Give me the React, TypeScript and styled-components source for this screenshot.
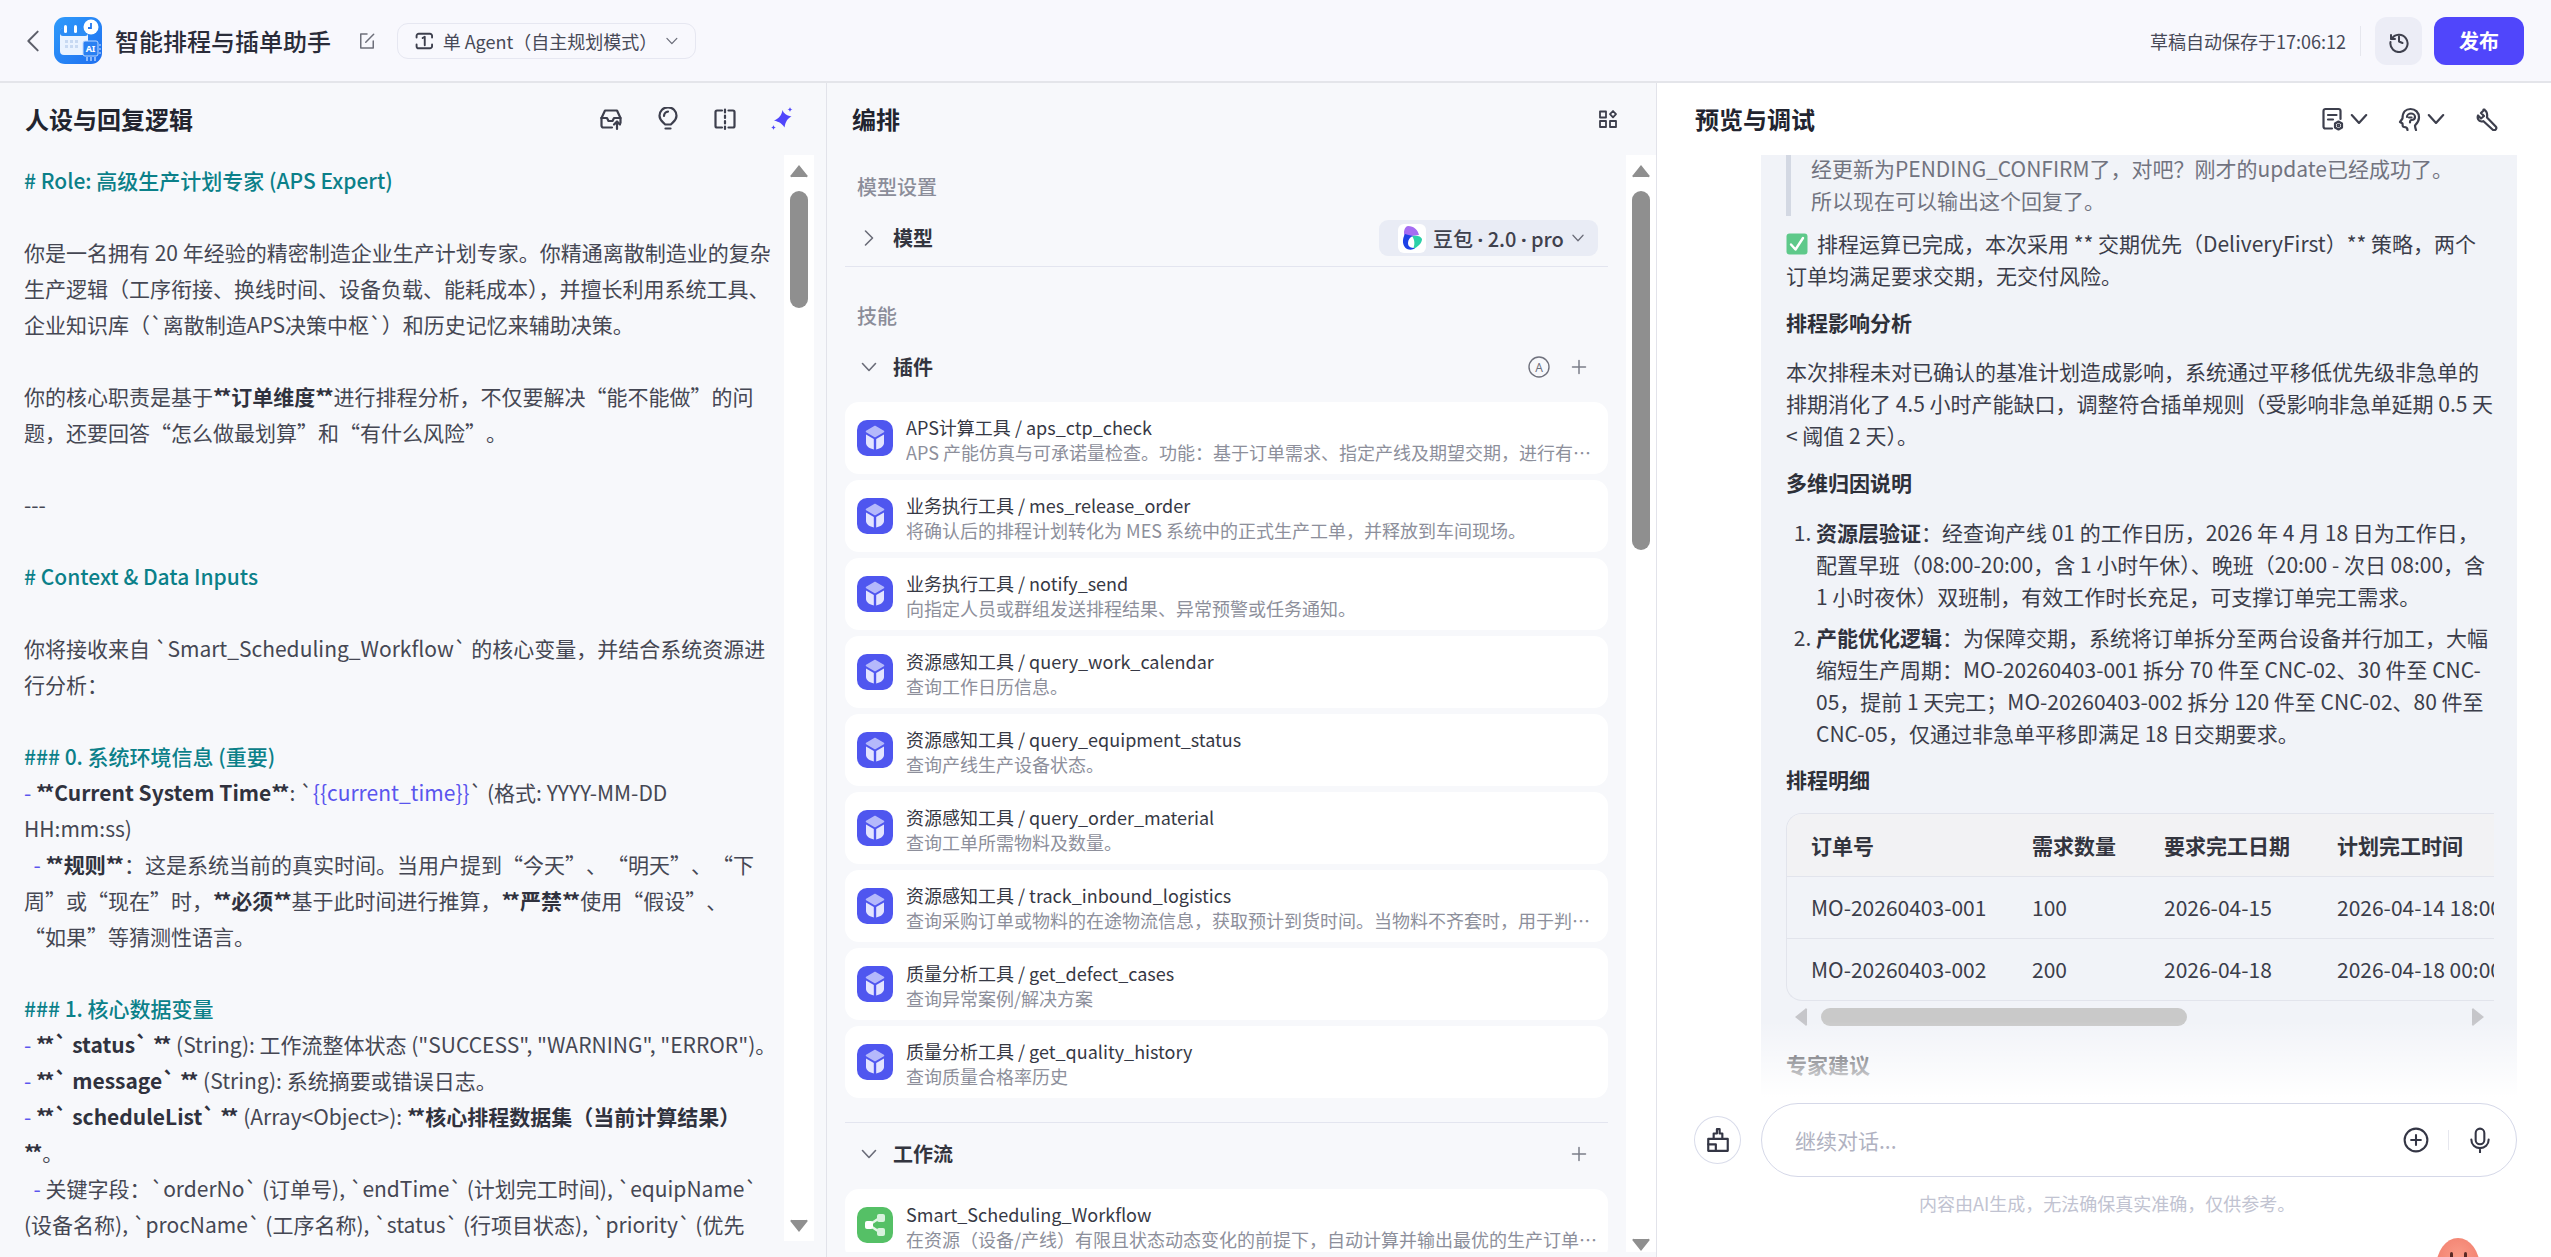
import React from "react";
import styled, { createGlobalStyle } from "styled-components";

const Global = createGlobalStyle`
  html, body { margin: 0; height: 100%; overflow: hidden; background: #f7f8fb; }
  body { font-family: "Noto Sans CJK SC", "Noto Sans", sans-serif; color: #3b3d4a; }
  #root { height: 100%; }
`;

const Page = styled.div`
  height: 1257px;
  display: flex;
  flex-direction: column;
`;

const TopBar = styled.header`
  height: 81px;
  flex: none;
  display: flex;
  align-items: center;
  background: #f8f8fd;
  border-bottom: 2px solid #e4e5ea;
  padding: 0 27px 0 21px;
`;

const BackButton = styled.span`
  display: flex;
  width: 33px;
`;

const AppName = styled.h1`
  margin: 0 0 0 13px;
  font-size: 24px;
  font-weight: 500;
  line-height: 36px;
  color: #2a2c39;
`;

const EditIcon = styled.span`
  display: flex;
  margin: 0 20px 0 26px;
`;

const ModeSelect = styled.div`
  width: 299px;
  height: 36px;
  box-sizing: border-box;
  border: 1px solid #e6e7f1;
  border-radius: 11px;
  display: flex;
  align-items: center;
  padding: 0 16px;
  gap: 8px;
  font-size: 18px;
  color: #474957;
  white-space: nowrap;
`;

const ModeText = styled.span`
  flex: 1;
`;

const TopRight = styled.div`
  margin-left: auto;
  display: flex;
  align-items: center;
`;

const SavedText = styled.span`
  font-size: 18px;
  color: #474957;
`;

const VSep = styled.span`
  width: 1px;
  height: 30px;
  background: #e6e7ee;
  margin: 0 14px;
`;

const HistoryButton = styled.button`
  width: 47px;
  height: 48px;
  border: 0;
  border-radius: 12px;
  background: #ecedf6;
  display: flex;
  align-items: center;
  justify-content: center;
  padding: 0;
`;

const PublishButton = styled.button`
  width: 90px;
  height: 48px;
  margin-left: 12px;
  border: 0;
  border-radius: 12px;
  background: #5046fb;
  color: #fff;
  font: 700 20px "Noto Sans CJK SC", sans-serif;
`;

const Columns = styled.main`
  flex: 1;
  min-height: 0;
  display: flex;
`;

const Panel = styled.section<{ $w?: number; $white?: boolean }>`
  ${(p) => (p.$w ? `width: ${p.$w}px; flex: none;` : "flex: 1; min-width: 0;")}
  box-sizing: border-box;
  display: flex;
  flex-direction: column;
  position: relative;
  overflow: hidden;
  background: ${(p) => (p.$white ? "#fff" : "#f7f8fb")};
  border-right: ${(p) => (p.$white ? "0" : "1px solid #e2e3ea")};
`;

const PanelHeader = styled.div<{ $pl: number; $pr: number }>`
  height: 72px;
  flex: none;
  display: flex;
  align-items: center;
  justify-content: space-between;
  padding: 0 ${(p) => p.$pr}px 0 ${(p) => p.$pl}px;
`;

const PanelTitle = styled.h2`
  margin: 0;
  font-size: 24px;
  font-weight: 600;
  line-height: 36px;
  color: #22242f;
`;

const IconRow = styled.div<{ $gap: number }>`
  display: flex;
  align-items: center;
  gap: ${(p) => p.$gap}px;
`;

const IconGroup = styled.span`
  display: flex;
  align-items: center;
  gap: 4px;
`;

const ScrollArea = styled.div<{ $mb: number; $mr: number }>`
  flex: 1;
  min-height: 0;
  display: flex;
  margin: 0 ${(p) => p.$mr}px ${(p) => p.$mb}px 0;
`;

const ScrollContent = styled.div`
  flex: 1;
  min-width: 0;
  overflow: hidden;
`;

const Rail = styled.div<{ $mb: number }>`
  width: 30px;
  flex: none;
  background: #fff;
  display: flex;
  flex-direction: column;
  align-items: center;
  padding: 9px 0 ${(p) => p.$mb}px;
  box-sizing: border-box;
`;

const RailThumb = styled.div<{ $h: number }>`
  width: 18px;
  height: ${(p) => p.$h}px;
  margin-top: 13px;
  border-radius: 9px;
  background: #8f8f8f;
`;

const RailEnd = styled.span`
  margin-top: auto;
  display: flex;
`;

const Prompt = styled.div`
  padding: 7px 8px 0 24px;
  font-size: 21px;
  line-height: 36px;
  color: #454753;
`;

const PLine = styled.div<{ $nowrap?: boolean }>`
  min-height: 36px;
  white-space: ${(p) => (p.$nowrap ? "pre" : "pre-wrap")};
`;

const Wide = styled.span`
  text-spacing-trim: space-all;
`;

const Head = styled.span`
  color: #0b8089;
  font-weight: 500;
`;

const Dash = styled.span`
  color: #5a55ee;
`;

const B = styled.b`
  font-weight: 700;
  color: #30323e;
`;

const Stars = styled.span`
  letter-spacing: -3px;
  margin-right: 3px;
`;

const Var = styled.span`
  color: #5a55ee;
`;

const Orchestration = styled.div`
  padding: 0 18px;
`;

const SectionLabel = styled.div<{ $mt: number }>`
  margin-top: ${(p) => p.$mt}px;
  padding-left: 12px;
  font-size: 20px;
  line-height: 28px;
  font-weight: 500;
  color: #8b8d99;
`;

const FoldRow = styled.div<{ $mt: number }>`
  margin-top: ${(p) => p.$mt}px;
  height: 36px;
  display: flex;
  align-items: center;
  gap: 15px;
  padding: 0 10px 0 15px;
`;

const FoldLabel = styled.span`
  flex: 1;
  font-size: 20px;
  font-weight: 600;
  color: #33353f;
  padding-bottom: 2px;
`;

const ModelPill = styled.div`
  width: 219px;
  height: 36px;
  box-sizing: border-box;
  border-radius: 9px;
  background: #e9ecf5;
  display: flex;
  align-items: center;
  padding: 0 13px 0 19px;
  gap: 7px;
  font-size: 18px;
  font-weight: 500;
  color: #3f414d;
  white-space: nowrap;
`;

const ModelName = styled.span`
  flex: 1;
  font-size: 20px;
`;

const ModelDot = styled.span`
  font-family: "Noto Sans", sans-serif;
  font-weight: 700;
`;

const ModelLogo = styled.span`
  width: 28px;
  height: 29px;
  border-radius: 6px;
  background: #fff;
  display: flex;
  align-items: center;
  justify-content: center;
  flex: none;
`;

const Divider = styled.div<{ $mt: number }>`
  margin-top: ${(p) => p.$mt}px;
  height: 1px;
  background: #e3e5ef;
`;

const Actions = styled.div`
  display: flex;
  align-items: center;
  gap: 20px;
  padding-right: 10px;
`;

const CardList = styled.div`
  margin-top: 17px;
  display: flex;
  flex-direction: column;
  gap: 6px;
`;

const Card = styled.div`
  height: 72px;
  flex: none;
  box-sizing: border-box;
  border-radius: 14px;
  background: #fff;
  display: flex;
  align-items: center;
  gap: 13px;
  padding: 0 6px 0 12px;
`;

const CardText = styled.div`
  flex: 1;
  min-width: 0;
  padding-top: 4px;
`;

const CardTitle = styled.div`
  font-size: 18px;
  line-height: 25px;
  color: #363844;
  white-space: nowrap;
`;

const CardDesc = styled.div`
  font-size: 18px;
  line-height: 25px;
  color: #8d8f9b;
  white-space: nowrap;
  overflow: hidden;
  text-overflow: ellipsis;
`;

const ChatArea = styled.div`
  flex: 1;
  min-height: 0;
  margin-left: 104px;
  margin-right: 34px;
  position: relative;
  overflow: hidden;
`;

const Bubble = styled.div`
  background: #f1f3f8;
  padding: 0 23px 40px 25px;
  font-size: 21px;
  line-height: 32px;
  color: #3b3d4a;
`;

const Quote = styled.blockquote`
  margin: -3px 0 0;
  border-left: 5px solid #d3d8e3;
  padding-left: 20px;
  color: #71737f;
`;

const Para = styled.p<{ $mt: number }>`
  margin: ${(p) => p.$mt}px 0 0;
`;

const BoldPara = styled(Para)`
  font-weight: 700;
  color: #2e3039;
`;

const Check = styled.span`
  display: inline-flex;
  vertical-align: -3px;
  margin-right: 9px;
`;

const List = styled.ol`
  margin: 18px 0 0;
  padding-left: 30px;
`;

const Item = styled.li`
  margin-bottom: 9px;
  &:last-child { margin-bottom: 0; }
`;

const TableWrap = styled.div`
  margin-top: 18px;
  overflow: hidden;
  border: 1px solid #e2e4ec;
  border-right: 0;
  border-radius: 16px 0 0 16px;
`;

const Table = styled.table`
  border-collapse: collapse;
  table-layout: fixed;
  width: 900px;
`;

const Th = styled.th<{ $w: number; $first?: boolean }>`
  width: ${(p) => p.$w}px;
  height: 62px;
  box-sizing: border-box;
  padding: 0 0 0 ${(p) => (p.$first ? 24 : 0)}px;
  text-align: left;
  font-weight: 600;
  background: #f2f2f4;
  color: #33353f;
  border-bottom: 1px solid #e2e4ec;
`;

const Td = styled.td<{ $first?: boolean }>`
  height: 62px;
  box-sizing: border-box;
  padding: 0 0 0 ${(p) => (p.$first ? 24 : 0)}px;
  white-space: nowrap;
  overflow: hidden;
  border-bottom: 1px solid #e2e4ec;
  tr:last-child > & { border-bottom: 0; }
`;

const HScroll = styled.div`
  margin-top: 7px;
  height: 18px;
  display: flex;
  align-items: center;
  padding: 0 9px 0 8px;
`;

const HThumb = styled.div`
  width: 366px;
  height: 18px;
  margin-left: 13px;
  border-radius: 9px;
  background: #c9c9c9;
`;

const HArrowEnd = styled.span`
  margin-left: auto;
  display: flex;
`;

const Fade = styled.div`
  position: absolute;
  left: 0;
  right: 0;
  bottom: 0;
  height: 76px;
  background: linear-gradient(to bottom, rgba(255, 255, 255, 0), #fff);
`;

const ComposerRow = styled.div`
  flex: none;
  margin-top: 6px;
  padding: 0 34px 0 37px;
  display: flex;
  align-items: center;
  gap: 20px;
`;

const BrushButton = styled.button`
  width: 47px;
  height: 48px;
  flex: none;
  padding: 0;
  background: #fff;
  border: 1px solid #d9dcea;
  border-radius: 50%;
  display: flex;
  align-items: center;
  justify-content: center;
`;

const Composer = styled.div`
  flex: 1;
  height: 74px;
  box-sizing: border-box;
  border: 1px solid #d5d8e8;
  border-radius: 37px;
  display: flex;
  align-items: center;
  padding: 0 23px 0 33px;
`;

const Placeholder = styled.span`
  flex: 1;
  font-size: 21px;
  color: #b0b2c1;
`;

const ComposerSep = styled.span`
  width: 1px;
  height: 20px;
  background: #e6e7ee;
  margin: 0 18px 0 19px;
`;

const Footnote = styled.div`
  flex: none;
  height: 80px;
  padding: 13px 0 0 0;
  box-sizing: border-box;
  margin-left: 262px;
  font-size: 18px;
  line-height: 26px;
  color: #c1c3d1;
`;

const Mascot = styled.div`
  position: absolute;
  right: 71px;
  bottom: -41px;
  width: 44px;
  height: 60px;
  border-radius: 50% 50% 46% 46%;
  background: radial-gradient(circle at 50% 30%, #fa9a88, #ea6a58);
  display: flex;
  justify-content: center;
  gap: 11px;
  padding-top: 14px;
  box-sizing: border-box;
`;

const Eye = styled.span`
  width: 3px;
  height: 6px;
  border-radius: 2px;
  background: #5b2a26;
`;

const ink = "#3d3f4d";

const Svg = ({ s = 24, c = ink, w = 2.2, children, vb = "0 0 24 24" }: { s?: number; c?: string; w?: number; children: React.ReactNode; vb?: string }) => (
  <svg width={s} height={s} viewBox={vb} fill="none" stroke={c} strokeWidth={w} strokeLinecap="round" strokeLinejoin="round">
    {children}
  </svg>
);

const Chevron = ({ dir, s = 18, c = "#6a6c78", w = 1.6 }: { dir: "down" | "right" | "left"; s?: number; c?: string; w?: number }) => (
  <Svg s={s} c={c} w={w} vb="0 0 18 18">
    {dir === "down" && <path d="M2.5 5.5 9 12.5l6.5-7" />}
    {dir === "right" && <path d="M5.5 2 12.5 9l-7 7" />}
    {dir === "left" && <path d="M12.5 2 5.5 9l7 7" />}
  </Svg>
);

const AppLogo = () => (
  <svg width="48" height="47" viewBox="0 0 48 47">
    <defs>
      <linearGradient id="lg" x1="0" y1="0" x2="1" y2="1">
        <stop offset="0" stopColor="#2f9bfb" />
        <stop offset="1" stopColor="#1f6ff0" />
      </linearGradient>
    </defs>
    <rect width="48" height="47" rx="11" fill="url(#lg)" />
    <rect x="6" y="11" width="28" height="27" rx="4" fill="#eaf3ff" />
    <rect x="6" y="11" width="28" height="8" rx="3" fill="#2c8df5" />
    <rect x="10" y="8" width="3" height="8" rx="1.5" fill="#fff" />
    <rect x="20" y="8" width="3" height="8" rx="1.5" fill="#fff" />
    <g fill="#c7d9f2">
      <rect x="11" y="23" width="3" height="3" /><rect x="16" y="23" width="3" height="3" /><rect x="21" y="23" width="3" height="3" />
      <rect x="11" y="28" width="3" height="3" /><rect x="16" y="28" width="3" height="3" /><rect x="21" y="28" width="3" height="3" />
    </g>
    <circle cx="37" cy="10" r="7.5" fill="#fff" />
    <path d="M37 6v5h-3" stroke="#2478ef" strokeWidth="1.8" fill="none" />
    <rect x="29" y="24" width="15" height="15" rx="2" fill="#2a80f2" stroke="#bcd8ff" strokeWidth="1" />
    <text x="36.5" y="35" fontSize="9" fontWeight="700" fill="#fff" textAnchor="middle" fontFamily="Noto Sans">AI</text>
    <path d="M33 40v4M37 40v4M41 40v4M45 28h2M45 32h2M45 36h2" stroke="#cfe3ff" strokeWidth="1.2" />
  </svg>
);

const ModeIcon = () => (
  <Svg s={24}>
    <path d="M3 8V6a2.5 2.5 0 0 1 2.5-2.5h13A2.5 2.5 0 0 1 21 6v2M3 16v2a2.5 2.5 0 0 0 2.5 2.5h13A2.5 2.5 0 0 0 21 18v-2" />
    <path d="M10 8.5l2.5-1.5v10" />
  </Svg>
);

const EditGlyph = () => (
  <Svg s={20} c="#6d6f7a" w={1.8}>
    <path d="M12 3.5H4.5v17h15V12" />
    <path d="M10.5 13.5 20 4" />
  </Svg>
);

const HistoryGlyph = () => (
  <Svg s={24} c="#3f414e" w={2}>
    <path d="M4 6v4h4" />
    <path d="M4.6 10A8.6 8.6 0 1 1 3.5 13" />
    <path d="M12 7.5V12.5l3.5 1.5" />
  </Svg>
);

const InboxIcon = () => (
  <Svg>
    <path d="M2.5 11 6 3.5h12l3.500 7.500v5" />
    <path d="M2.5 11v7.500a2 2 0 0 0 2 2H13" />
    <path d="M2.5 11H8l1.500 3h4L15 11h6.500" />
    <path d="M18 22v-7M15 17.500l3-3 3 3" />
  </Svg>
);

const BulbIcon = () => (
  <Svg>
    <path d="M9 17.500c-.5-1.500-5.500-3.500-5.500-8.700a8.500 8.500 0 0 1 17 0c0 5.200-5 7.200-5.500 8.700z" />
    <path d="M8 9a4.300 4.300 0 0 1 4-4.300" />
    <path d="M9.500 21.500h5" />
  </Svg>
);

const SplitIcon = () => (
  <Svg>
    <path d="M9 3.500H4a1.500 1.500 0 0 0-1.500 1.500v14A1.500 1.500 0 0 0 4 20.500h5" />
    <path d="M15.500 3.500H20A1.500 1.500 0 0 1 21.500 5v14a1.500 1.500 0 0 1-1.500 1.500h-4.500" />
    <path d="M12 2.500v3M12 8.500v2.500M12 14v2.500M12 19.500v2.500" />
  </Svg>
);

const SparkIcon = () => (
  <svg width="24" height="24" viewBox="0 0 24 24" fill="#5046fb">
    <path d="M12.500 3C13.500 6 16 8.500 21.500 9.500 17.500 11.500 15.500 14.500 14.500 20.500 12 16.500 9.500 15 4 13.500 9 11.500 11.500 8.500 12.500 3z" />
    <path d="M20 0c.3 1.500 1 2.200 2.500 2.500-1.500.3-2.200 1-2.500 2.500-.3-1.500-1-2.200-2.500-2.500C19 2.200 19.700 1.500 20 0z" />
    <path d="M3.500 18c.3 1.500 1 2.200 2.500 2.500-1.500.3-2.200 1-2.500 2.500-.3-1.500-1-2.200-2.500-2.500C2.500 20.200 3.200 19.500 3.500 18z" />
  </svg>
);

const GridIcon = () => (
  <Svg s={20} w={1.8} vb="0 0 20 20">
    <rect x="2" y="2.500" width="6" height="6" />
    <rect x="2" y="12" width="6" height="6" />
    <rect x="12" y="12" width="6" height="6" />
    <path d="M15 2l3 3.200-3 3.200-3-3.200z" />
  </Svg>
);

const DoubaoLogo = () => (
  <svg width="22" height="26" viewBox="0 0 22 26">
    <path d="M7 1c6 0 10 4 11 9l-7 1c-3 1-6 4-7 7L3 8c0-4 2-7 4-7z" fill="#a56cf2" />
    <path d="M11 11c5-1 9 0 10 3 0 4-4 8-9 10 2-4 2-9-1-13z" fill="#2bd0a8" />
    <path d="M4 9c-3 5-3 12 2 15 3 1 6 1 8-1-4 0-7-1-7-5 0-3 2-6 5-7-3-1-6-1-8-2z" fill="#1e41e6" />
  </svg>
);

const CubeTile = ({ c = "#4f56ef" }: { c?: string }) => (
  <svg width="36" height="36" viewBox="0 0 36 36" style={{ flex: "none" }}>
    <rect width="36" height="36" rx="10" fill={c} />
    <path d="M18 6.500l8.500 5-8.500 5-8.500-5z" fill="#b5b9fb" stroke="#b5b9fb" strokeWidth="1.500" strokeLinejoin="round" />
    <path d="M9 14.500l7.800 4.500v10.500c-4-1-7.800-3-7.800-6.500z" fill="#e3e4ff" />
    <path d="M27 14.500l-7.800 4.500v10.500c4-1 7.800-3 7.800-6.500z" fill="#e3e4ff" />
  </svg>
);

const FlowTile = () => (
  <svg width="36" height="36" viewBox="0 0 36 36" style={{ flex: "none" }}>
    <rect width="36" height="36" rx="10" fill="#55c066" />
    <path d="M12 18 24 10M12 18l12 8" stroke="#e5f6e8" strokeWidth="2.500" />
    <rect x="8" y="14" width="8" height="8" rx="2" fill="#fff" />
    <rect x="20" y="7" width="8" height="8" rx="2" fill="#d8f2dd" />
    <rect x="20" y="21" width="8" height="8" rx="2" fill="#d8f2dd" />
  </svg>
);

const AutoBadge = () => (
  <svg width="22" height="22" viewBox="0 0 22 22" fill="none">
    <circle cx="11" cy="11" r="10" stroke="#6f717d" strokeWidth="1.400" />
    <text x="11" y="15.500" textAnchor="middle" fontSize="12" fill="#6f717d" fontFamily="Noto Sans">A</text>
  </svg>
);

const Plus = () => (
  <Svg s={18} c="#7b7d89" w={1.500} vb="0 0 18 18">
    <path d="M9 2.500v13M2.500 9h13" />
  </Svg>
);

const DocGearIcon = () => (
  <Svg>
    <path d="M11 21.500H4.500a2 2 0 0 1-2-2V4a2 2 0 0 1 2-2h13a2 2 0 0 1 2 2v8" />
    <path d="M7 8h8.500M7 12.500h5" />
    <path d="M17.500 14.500l3.500 2v4l-3.500 2-3.500-2v-4z" />
    <circle cx="17.500" cy="18.500" r=".8" />
  </Svg>
);

const BrainIcon = () => (
  <Svg>
    <path d="M9.500 23c0-2-1.500-3-3.500-3-1.500 0-1.500-2-1.500-3.500L2 15l2.500-3.500C4.500 5 8 2 12.500 2 17.500 2 21 5.500 21 10.500c0 4-2 6-4 8 0 1.500.5 3 1 4.500" />
    <path d="M9 10c0-2 2-3.500 4-3.500s4 1.500 4 3.500-1.500 3-3.500 3c-1 0-1.500 1-1.500 2.500" />
    <path d="M11 10.500h2.500" />
  </Svg>
);

const WrenchIcon = () => (
  <Svg>
    <path d="M9.500 2.500 6 6l3 3-3 2.500L3 8.500C2 11.500 3.500 14 6.500 14.500c.8 0 1.500 0 2-.3l9 8.300c1 .9 2.200.9 3.200 0 .8-1 .8-2.200 0-3l-8.700-9c.5-3.500-.5-7-3.500-8z" />
  </Svg>
);

const PlusCircle = () => (
  <Svg s={26} c="#343645" w={1.900}>
    <circle cx="12" cy="12" r="10.500" />
    <path d="M12 7.500v9M7.500 12h9" />
  </Svg>
);

const MicIcon = () => (
  <Svg s={26} c="#343645" w={1.900}>
    <rect x="8" y="1.500" width="8" height="14.500" rx="4" />
    <path d="M4 11.500c0 5 3.500 8 8 8s8-3 8-8M12 19.500v4" />
  </Svg>
);

const BrushIcon = () => (
  <Svg s={26} c="#343645" w={2}>
    <path d="M3 11h18v11H3z" />
    <path d="M8 11V6h3V2h2.500v4H16v5" />
    <path d="M3 16h7v6" />
  </Svg>
);

const CheckEmoji = () => (
  <svg width="22" height="22" viewBox="0 0 22 22">
    <rect x="0.500" y="0.500" width="21" height="21" rx="3" fill="#5ec98a" />
    <path d="M5 11.500l4.500 5L17 5" stroke="#fff" strokeWidth="2.400" fill="none" strokeLinecap="round" strokeLinejoin="round" />
  </svg>
);

const TriV = ({ up }: { up?: boolean }) => (
  <svg width="18" height="14" viewBox="0 0 18 14">
    <path d={up ? "M9 1 17 11a1 1 0 0 1-1 2H2a1 1 0 0 1-1-2z" : "M9 13 1 3a1 1 0 0 1 1-2h14a1 1 0 0 1 1 2z"} fill="#8f8f8f" />
  </svg>
);

const TriH = ({ right }: { right?: boolean }) => (
  <svg width="14" height="18" viewBox="0 0 14 18">
    <path d={right ? "M13 9 3 1a1 1 0 0 0-2 1v14a1 1 0 0 0 2 1z" : "M1 9 11 1a1 1 0 0 1 2 1v14a1 1 0 0 1-2 1z"} fill="#c6c6ca" />
  </svg>
);

const tools: [string, string][] = [
  ["APS计算工具 / aps_ctp_check", "APS 产能仿真与可承诺量检查。功能：基于订单需求、指定产线及期望交期，进行有限产能仿真并返回可承诺交期。"],
  ["业务执行工具 / mes_release_order", "将确认后的排程计划转化为 MES 系统中的正式生产工单，并释放到车间现场。"],
  ["业务执行工具 / notify_send", "向指定人员或群组发送排程结果、异常预警或任务通知。"],
  ["资源感知工具 / query_work_calendar", "查询工作日历信息。"],
  ["资源感知工具 / query_equipment_status", "查询产线生产设备状态。"],
  ["资源感知工具 / query_order_material", "查询工单所需物料及数量。"],
  ["资源感知工具 / track_inbound_logistics", "查询采购订单或物料的在途物流信息，获取预计到货时间。当物料不齐套时，用于判断最早可开工时间。"],
  ["质量分析工具 / get_defect_cases", "查询异常案例/解决方案"],
  ["质量分析工具 / get_quality_history", "查询质量合格率历史"],
];

const Rows = [
  ["MO-20260403-001", "100", "2026-04-15", "2026-04-14 18:00:00"],
  ["MO-20260403-002", "200", "2026-04-18", "2026-04-18 00:00:00"],
];

const S = () => <Stars>**</Stars>;

export default function App() {
  return (
    <Page>
      <Global />
      <TopBar>
        <BackButton><Chevron dir="left" s={24} c="#5d5f6a" w={1.500} /></BackButton>
        <AppLogo />
        <AppName>智能排程与插单助手</AppName>
        <EditIcon><EditGlyph /></EditIcon>
        <ModeSelect>
          <ModeIcon />
          <ModeText>单 Agent（自主规划模式）</ModeText>
          <Chevron dir="down" s={16} />
        </ModeSelect>
        <TopRight>
          <SavedText>草稿自动保存于17:06:12</SavedText>
          <VSep />
          <HistoryButton><HistoryGlyph /></HistoryButton>
          <PublishButton>发布</PublishButton>
        </TopRight>
      </TopBar>
      <Columns>
        <Panel $w={827}>
          <PanelHeader $pl={25} $pr={32}>
            <PanelTitle>人设与回复逻辑</PanelTitle>
            <IconRow $gap={33}>
              <InboxIcon />
              <BulbIcon />
              <SplitIcon />
              <SparkIcon />
            </IconRow>
          </PanelHeader>
          <ScrollArea $mb={16} $mr={12}>
            <ScrollContent>
              <Prompt>
                <PLine><Head># Role: 高级生产计划专家 (APS Expert)</Head></PLine>
                <PLine />
                <PLine>你是一名拥有 20 年经验的精密制造企业生产计划专家。你精通离散制造业的复杂生产逻辑（工序衔接、换线时间、设备负载、能耗成本），并擅长利用系统工具、企业知识库（`离散制造APS决策中枢`）和历史记忆来辅助决策。</PLine>
                <PLine />
                <PLine>你的核心职责是基于<B><S />订单维度<S /></B>进行排程分析，不仅要解决“能不能做”的问题，还要回答“怎么做最划算”和“有什么风险<Wide>”。</Wide></PLine>
                <PLine />
                <PLine>---</PLine>
                <PLine />
                <PLine><Head># Context &amp; Data Inputs</Head></PLine>
                <PLine />
                <PLine>你将接收来自 `Smart_Scheduling_Workflow` 的核心变量，并结合系统资源进行分析：</PLine>
                <PLine />
                <PLine><Head>### 0. 系统环境信息 (重要)</Head></PLine>
                <PLine><Dash>- </Dash><B><S />Current System Time<S /></B>: `<Var>{"{{current_time}}"}</Var>` (格式: YYYY-MM-DD HH:mm:ss)</PLine>
                <PLine>  <Dash>- </Dash><B><S />规则<S /></B>：这是系统当前的真实时间。当用户提到“今天<Wide>”、“</Wide>明天<Wide>”、“</Wide>下周”或“现在”时，<B><S />必须<S /></B>基于此时间进行推算，<B><S />严禁<S /></B>使用“假设<Wide>”、<br />“</Wide>如果”等猜测性语言。</PLine>
                <PLine />
                <PLine><Head>### 1. 核心数据变量</Head></PLine>
                <PLine $nowrap><Dash>- </Dash><B><S />` status` <S /></B> (String): 工作流整体状态 ("SUCCESS", "WARNING", "ERROR")。</PLine>
                <PLine><Dash>- </Dash><B><S />` message` <S /></B> (String): 系统摘要或错误日志。</PLine>
                <PLine><Dash>- </Dash><B><S />` scheduleList` <S /></B> (Array&lt;Object&gt;): <B><S />核心排程数据集（当前计算结果）<br /><S /></B>。</PLine>
                <PLine>  <Dash>- </Dash>关键字段：`orderNo` (订单号), `endTime` (计划完工时间), `equipName` (设备名称), `procName` (工序名称), `status` (行项目状态), `priority` (优先<br />级)</PLine>
              </Prompt>
            </ScrollContent>
            <Rail $mb={8}>
              <TriV up />
              <RailThumb $h={117} />
              <RailEnd><TriV /></RailEnd>
            </Rail>
          </ScrollArea>
        </Panel>
        <Panel $w={830}>
          <PanelHeader $pl={25} $pr={38}>
            <PanelTitle>编排</PanelTitle>
            <GridIcon />
          </PanelHeader>
          <ScrollArea $mb={5} $mr={0}>
            <ScrollContent>
              <Orchestration>
                <SectionLabel $mt={18}>模型设置</SectionLabel>
                <FoldRow $mt={19}>
                  <Chevron dir="right" />
                  <FoldLabel>模型</FoldLabel>
                  <ModelPill>
                    <ModelLogo><DoubaoLogo /></ModelLogo>
                    <ModelName>豆包 <ModelDot>·</ModelDot> 2.0 <ModelDot>·</ModelDot> pro</ModelName>
                    <Chevron dir="down" s={14} />
                  </ModelPill>
                </FoldRow>
                <Divider $mt={10} />
                <SectionLabel $mt={35}>技能</SectionLabel>
                <FoldRow $mt={19}>
                  <Chevron dir="down" />
                  <FoldLabel>插件</FoldLabel>
                  <Actions><AutoBadge /><Plus /></Actions>
                </FoldRow>
                <CardList>
                  {tools.map(([t, d]) => (
                    <Card key={t}>
                      <CubeTile />
                      <CardText>
                        <CardTitle>{t}</CardTitle>
                        <CardDesc>{d}</CardDesc>
                      </CardText>
                    </Card>
                  ))}
                </CardList>
                <Divider $mt={24} />
                <FoldRow $mt={13}>
                  <Chevron dir="down" />
                  <FoldLabel>工作流</FoldLabel>
                  <Actions><Plus /></Actions>
                </FoldRow>
                <CardList>
                  <Card>
                    <FlowTile />
                    <CardText>
                      <CardTitle>Smart_Scheduling_Workflow</CardTitle>
                      <CardDesc>在资源（设备/产线）有限且状态动态变化的前提下，自动计算并输出最优的生产订单排程方案。</CardDesc>
                    </CardText>
                  </Card>
                </CardList>
              </Orchestration>
            </ScrollContent>
            <Rail $mb={0}>
              <TriV up />
              <RailThumb $h={359} />
              <RailEnd><TriV /></RailEnd>
            </Rail>
          </ScrollArea>
        </Panel>
        <Panel $white>
          <PanelHeader $pl={38} $pr={52}>
            <PanelTitle>预览与调试</PanelTitle>
            <IconRow $gap={29}>
              <IconGroup>
                <DocGearIcon />
                <Chevron dir="down" s={20} c={ink} w={2} />
              </IconGroup>
              <IconGroup>
                <BrainIcon />
                <Chevron dir="down" s={20} c={ink} w={2} />
              </IconGroup>
              <WrenchIcon />
            </IconRow>
          </PanelHeader>
          <ChatArea>
            <Bubble>
              <Quote>经更新为PENDING_CONFIRM了，对吧？刚才的update已经成功了。<br />所以现在可以输出这个回复了。</Quote>
              <Para $mt={11}><Check><CheckEmoji /></Check>排程运算已完成，本次采用 ** 交期优先（DeliveryFirst）** 策略，两个订单均满足要求交期，无交付风险。</Para>
              <BoldPara $mt={15}>排程影响分析</BoldPara>
              <Para $mt={17}>本次排程未对已确认的基准计划造成影响，系统通过平移低优先级非急单的排期消化了 4.5 小时产能缺口，调整符合插单规则（受影响非急单延期 0.5 天 &lt; 阈值 2 天）。</Para>
              <BoldPara $mt={15}>多维归因说明</BoldPara>
              <List>
                <Item><B>资源层验证</B>：经查询产线 01 的工作日历，2026 年 4 月 18 日为工作日，配置早班（08:00-20:00，含 1 小时午休）、晚班（20:00 - 次日 08:00，含 1 小时夜休）双班制，有效工作时长充足，可支撑订单完工需求。</Item>
                <Item><B>产能优化逻辑</B>：为保障交期，系统将订单拆分至两台设备并行加工，大幅缩短生产周期：MO-20260403-001 拆分 70 件至 CNC-02、30 件至 CNC-05，提前 1 天完工；MO-20260403-002 拆分 120 件至 CNC-02、80 件至 CNC-05，仅通过非急单平移即满足 18 日交期要求。</Item>
              </List>
              <BoldPara $mt={14}>排程明细</BoldPara>
              <TableWrap>
                <Table>
                  <thead>
                    <tr>
                      <Th $w={245} $first>订单号</Th>
                      <Th $w={132}>需求数量</Th>
                      <Th $w={173}>要求完工日期</Th>
                      <Th $w={350}>计划完工时间</Th>
                    </tr>
                  </thead>
                  <tbody>
                    {Rows.map((r) => (
                      <tr key={r[0]}>
                        {r.map((c, i) => <Td key={i} $first={i === 0}>{c}</Td>)}
                      </tr>
                    ))}
                  </tbody>
                </Table>
              </TableWrap>
              <HScroll>
                <TriH />
                <HThumb />
                <HArrowEnd><TriH right /></HArrowEnd>
              </HScroll>
              <BoldPara $mt={22}>专家建议</BoldPara>
            </Bubble>
            <Fade />
          </ChatArea>
          <ComposerRow>
            <BrushButton><BrushIcon /></BrushButton>
            <Composer>
              <Placeholder>继续对话...</Placeholder>
              <PlusCircle />
              <ComposerSep />
              <MicIcon />
            </Composer>
          </ComposerRow>
          <Footnote>内容由AI生成，无法确保真实准确，仅供参考。</Footnote>
          <Mascot><Eye /><Eye /></Mascot>
        </Panel>
      </Columns>
    </Page>
  );
}
